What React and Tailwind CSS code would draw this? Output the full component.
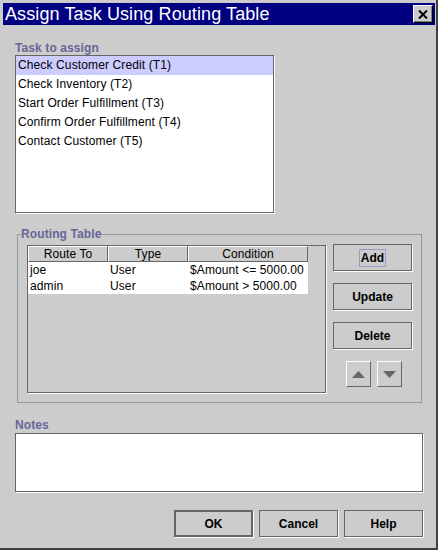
import React from 'react';

const tasks = [
  'Check Customer Credit (T1)',
  'Check Inventory (T2)',
  'Start Order Fulfillment (T3)',
  'Confirm Order Fulfillment (T4)',
  'Contact Customer (T5)',
];

const routes = [
  { to: 'joe', type: 'User', cond: '$Amount <= 5000.00' },
  { to: 'admin', type: 'User', cond: '$Amount > 5000.00' },
];

const MetalButton = ({ children, focused, isDefault }) => (
  <button
    className={`flex h-[27px] w-[79px] items-center justify-center bg-[#cccccc] text-[12px] font-bold text-black shadow-[1px_1px_0_#ffffff] ${
      isDefault ? 'border-2 border-[#666666]' : 'border border-[#666666]'
    }`}
  >
    {focused ? (
      <span className="border border-[#9999cc] px-[1px] leading-[16px]">{children}</span>
    ) : (
      children
    )}
  </button>
);

const ArrowButton = ({ down }) => (
  <button className="flex h-[26px] w-[25px] items-center justify-center border-t border-l border-t-white border-l-white border-r border-b border-r-[#666666] border-b-[#666666] bg-[#cccccc]">
    <svg width="13" height="7" viewBox="0 0 13 7">
      <path d={down ? 'M0 0 L13 0 L6.5 7 Z' : 'M6.5 0 L13 7 L0 7 Z'} fill="#666666" />
    </svg>
  </button>
);

const Label = ({ children }) => (
  <div className="text-[12px] font-bold leading-[14px] tracking-[0.1px] text-[#666699]">{children}</div>
);

export default function App() {
  return (
    <div className="h-[550px] w-[438px] border-r-2 border-b-2 border-[#404040] bg-[#cccccc] pt-[3px] pl-[3px] pr-[1px] font-['Liberation_Sans',Arial,sans-serif] text-black">
      {/* Title bar */}
      <div className="flex h-[22px] items-start bg-[#000080]">
        <span className="pl-[2px] text-[18px] leading-[22px] tracking-[0.1px] text-white">Assign Task Using Routing Table</span>
        <button className="mt-[2px] mr-[2px] ml-auto flex h-[18px] w-[20px] items-center justify-center border-t border-l border-t-white border-l-white border-r border-b border-r-black border-b-black bg-[#cccccc] shadow-[inset_-1px_-1px_0_#808080]">
          <svg width="10" height="9" viewBox="0 0 10 9">
            <path d="M1 0.5 L9 8.5 M9 0.5 L1 8.5" stroke="black" strokeWidth="2" />
          </svg>
        </button>
      </div>

      <div className="pl-[12px]">
        {/* Task list */}
        <div className="mt-[16px]">
          <Label>Task to assign</Label>
        </div>
        <div className="h-[158px] w-[259px] border border-[#666666] bg-white shadow-[1px_1px_0_#ffffff]">
          {tasks.map((t, i) => (
            <div
              key={t}
              className={`h-[19px] pl-[2px] text-[12px] leading-[19px] tracking-[0.12px] ${i === 0 ? 'bg-[#ccccff]' : ''}`}
            >
              {t}
            </div>
          ))}
        </div>

        {/* Routing table group */}
        <fieldset className="mt-[14px] ml-[2px] w-[405px] border border-[#999999] p-0">
          <legend className="ml-[3px] p-0 text-[12px] font-bold leading-[14px] tracking-[0.1px] text-[#666699]">Routing Table</legend>
          <div className="flex items-start pt-[3px] pr-[9px] pb-[9px] pl-[9px]">
            <div className="mt-[1px] h-[148px] w-[299px] border border-[#666666] bg-[#cccccc] shadow-[1px_1px_0_#ffffff]">
              <div className="flex text-[12px] leading-[14px] tracking-[0.1px]">
                <div className="w-[80px] border-t border-l border-t-white border-l-white border-r border-b border-r-[#666666] border-b-[#666666] text-center">Route To</div>
                <div className="w-[80px] border-t border-l border-t-white border-l-white border-r border-b border-r-[#666666] border-b-[#666666] text-center">Type</div>
                <div className="w-[120px] border-t border-l border-t-white border-l-white border-r border-b border-r-[#666666] border-b-[#666666] text-center">Condition</div>
              </div>
              {routes.map((r) => (
                <div key={r.to} className="flex w-[280px] bg-white text-[12px] leading-[16px] tracking-[0.1px]">
                  <div className="w-[80px] pl-[2px]">{r.to}</div>
                  <div className="w-[80px] pl-[2px]">{r.type}</div>
                  <div className="w-[120px] pl-[2px]">{r.cond}</div>
                </div>
              ))}
            </div>

            <div className="ml-[7px] flex w-[79px] flex-col gap-[12px]">
              <MetalButton focused>Add</MetalButton>
              <MetalButton>Update</MetalButton>
              <MetalButton>Delete</MetalButton>
              <div className="ml-[13px] flex gap-[6px]">
                <ArrowButton />
                <ArrowButton down />
              </div>
            </div>
          </div>
        </fieldset>

        {/* Notes */}
        <div className="mt-[15px]">
          <Label>Notes</Label>
        </div>
        <div className="mt-[1px] h-[59px] w-[408px] border border-[#666666] bg-white shadow-[1px_1px_0_#ffffff]" />

        {/* Dialog buttons */}
        <div className="mt-[18px] flex w-[408px] justify-end gap-[6px]">
          <MetalButton isDefault>OK</MetalButton>
          <MetalButton>Cancel</MetalButton>
          <MetalButton>Help</MetalButton>
        </div>
      </div>
    </div>
  );
}
